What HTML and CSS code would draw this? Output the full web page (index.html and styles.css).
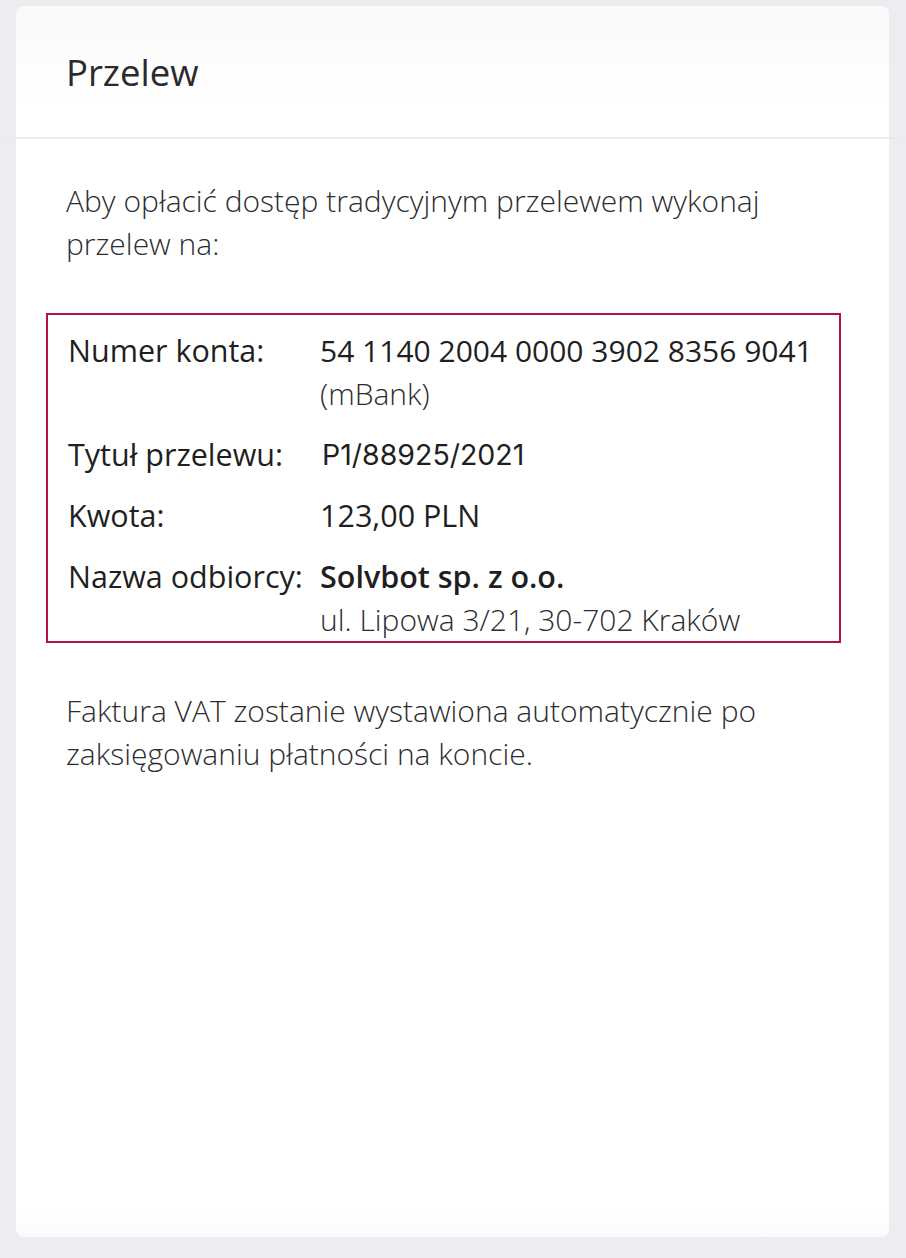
FILE: index.html
```html
<!DOCTYPE html>
<html lang="pl">
<head>
    <meta charset="UTF-8">
    <meta name="viewport" content="width=device-width, initial-scale=1.0">
    <title>Przelew</title>
    <link rel="stylesheet" href="styles.css">
</head>
<body>
    <div class="card">
        <div class="card-header">
            <h1>Przelew</h1>
        </div>
        <div class="card-body">
            <p class="intro">Aby opłacić dostęp tradycyjnym przelewem wykonaj przelew na:</p>
            <div class="transfer">
                <div class="row">
                    <div class="label">Numer konta:</div>
                    <div class="value">
                        <div class="account">54 1140 2004 0000 3902 8356 9041</div>
                        <div class="light">(mBank)</div>
                    </div>
                </div>
                <div class="row">
                    <div class="label">Tytuł przelewu:</div>
                    <div class="value title-ref">P1/88925/2021</div>
                </div>
                <div class="row">
                    <div class="label">Kwota:</div>
                    <div class="value">123,00 PLN</div>
                </div>
                <div class="row">
                    <div class="label">Nazwa odbiorcy:</div>
                    <div class="value">
                        <div class="company">Solvbot sp. z o.o.</div>
                        <div class="light">ul. Lipowa 3/21, 30-702 Kraków</div>
                    </div>
                </div>
            </div>
            <p class="note">Faktura VAT zostanie wystawiona automatycznie po zaksięgowaniu płatności na koncie.</p>
        </div>
    </div>
</body>
</html>
```

FILE: styles.css
```css
body {
    margin: 0;
    padding: 6px 17px 21px 16px;
    background-color: #ececf1;
    font-family: "Open Sans", "Noto Sans", sans-serif;
    color: #26262b;
}

.card {
    min-height: 1231px;
    border-radius: 8px;
    background: linear-gradient(to bottom, #fff calc(100% - 30px), #fbfbfc);
}

.card-header {
    position: relative;
    display: flex;
    align-items: center;
    height: 131px;
    padding-left: 50px;
    border-radius: 8px 8px 0 0;
    background: linear-gradient(to bottom, #f9f9fa, #fff 70%);
}

/* the divider runs past the card edges */
.card-header::after {
    content: "";
    position: absolute;
    left: -16px;
    right: -17px;
    bottom: -2px;
    height: 2px;
    background-color: #e9e9ee;
}

h1 {
    margin: 0;
    font-size: 36.5px;
    font-weight: 400;
    color: #2a2a2f;
}

.card-body {
    padding: 42px 48px 0 50px;
}

p {
    margin: 0;
    font-size: 30px;
    font-weight: 300;
    line-height: 43px;
    color: #2c2c30;
}

.transfer {
    margin: 48px 0 46px -20px;
    padding: 14px 20px 0;
    border: 2px solid #b0134a;
}

.row {
    display: flex;
    font-size: 30.5px;
    line-height: 43px;
    margin-bottom: 18px;
}

.row:last-child {
    margin-bottom: 0;
}

.label {
    width: 252px;
    flex-shrink: 0;
    font-weight: 400;
    color: #1f1f23;
}

.value {
    color: #1f1f23;
}

.account {
    font-size: 30px;
    font-weight: 450;
    white-space: nowrap;
}

.company {
    font-weight: 560;
}

.light {
    font-weight: 300;
    font-size: 30px;
    color: #2c2c30;
}

.title-ref {
    font-family: Inter, "Open Sans", sans-serif;
    font-weight: 400;
    font-size: 28.5px;
    padding-left: 2px;
}
```
